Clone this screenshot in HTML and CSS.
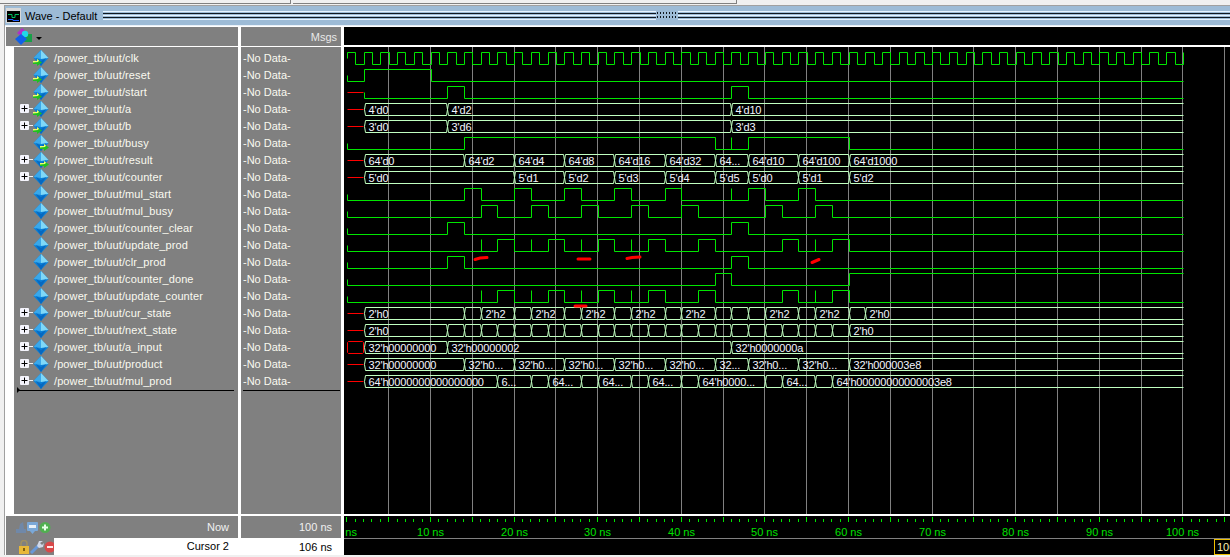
FILE: index.html
```html
<html>
  <head>
    <link rel="stylesheet" href="styles.css">
  </head>
  <body>
    <svg class="defs" width="0" height="0">
      <defs>
        <symbol id="diamond" viewBox="0 0 16 16">
          <polygon points="8,0 15.5,8 8,16 0.5,8" fill="#0a80d8"/>
          <polygon points="8,0 15.5,8 8,9" fill="#7fd8f8"/>
          <polygon points="8,0 8,9 0.5,8" fill="#3aa8ea"/>
          <polygon points="8,11 13,8 8,16 3,8" fill="#0668c0"/>
        </symbol>
        <symbol id="arrow" viewBox="0 0 9 7">
          <polygon points="0,2 4,2 4,0 9,3.5 4,7 4,5 0,5" fill="#20c020"/>
          <polygon points="0,2 4,2 4,0 6,1.5 5,3 0,3.5" fill="#f0ff70"/>
        </symbol>
        <symbol id="plus" viewBox="0 0 9 9">
          <rect x="0" y="0" width="9" height="9" rx="1" fill="#f4f4fc"/>
          <path d="M4.5 1.5V7.5M1.5 4.5H7.5" stroke="#000" stroke-width="1"/>
        </symbol>
      </defs>
    </svg>

    <div class="mdi-strip">
      <div class="mdi-tab tab-one"></div>
      <div class="mdi-tab tab-two"></div>
    </div>

    <div class="window">
      <div class="titlebar">
        <svg class="title-icon" width="15" height="15" viewBox="0 0 15 15">
          <rect width="15" height="15" fill="#d8d8d8"/>
          <rect x="1" y="3" width="13" height="11" fill="#000"/>
          <path d="M2 6.5H6V9.5H9V6.5H13" stroke="#00c060" fill="none"/>
          <path d="M2 11.5H7V12.5H13" stroke="#2060ff" fill="none"/>
        </svg>
        <span class="title-text">Wave - Default</span>
        <div class="title-lines"></div>
        <div class="title-grip"></div>
        <div class="title-lines"></div>
      </div>

      <div class="panes">
        <div class="col col-names">
          <div class="pane-head">
            <svg class="head-icon" width="17" height="17" viewBox="0 0 17 17">
              <polygon points="7,0 13,5 7,9 2,5" fill="#b030c8"/>
              <rect x="9" y="6" width="8" height="8" fill="#18a048"/>
              <circle cx="10" cy="6" r="3.2" fill="#20d8e8"/>
              <polygon points="6,6 12,11 6,17 0,11" fill="#1060e8"/>
            </svg>
            <span class="head-caret"></span>
          </div>
          <div class="pane-body">
            <div class="strip"></div>
            <div class="sig-list">
              <div class="sig"><span class="tree"></span><span class="icon"><svg width="16" height="16"><use href="#diamond"/></svg><svg class="arrow-in" width="9" height="7"><use href="#arrow"/></svg></span><span class="sig-name">/power_tb/uut/clk</span></div>
              <div class="sig"><span class="tree"></span><span class="icon"><svg width="16" height="16"><use href="#diamond"/></svg><svg class="arrow-in" width="9" height="7"><use href="#arrow"/></svg></span><span class="sig-name">/power_tb/uut/reset</span></div>
              <div class="sig"><span class="tree"></span><span class="icon"><svg width="16" height="16"><use href="#diamond"/></svg><svg class="arrow-in" width="9" height="7"><use href="#arrow"/></svg></span><span class="sig-name">/power_tb/uut/start</span></div>
              <div class="sig"><span class="tree has-plus"><svg width="9" height="9"><use href="#plus"/></svg></span><span class="icon"><svg width="16" height="16"><use href="#diamond"/></svg><svg class="arrow-in" width="9" height="7"><use href="#arrow"/></svg></span><span class="sig-name">/power_tb/uut/a</span></div>
              <div class="sig"><span class="tree has-plus"><svg width="9" height="9"><use href="#plus"/></svg></span><span class="icon"><svg width="16" height="16"><use href="#diamond"/></svg><svg class="arrow-in" width="9" height="7"><use href="#arrow"/></svg></span><span class="sig-name">/power_tb/uut/b</span></div>
              <div class="sig"><span class="tree"></span><span class="icon"><svg width="16" height="16"><use href="#diamond"/></svg><svg class="arrow-out" width="9" height="7"><use href="#arrow"/></svg></span><span class="sig-name">/power_tb/uut/busy</span></div>
              <div class="sig"><span class="tree has-plus"><svg width="9" height="9"><use href="#plus"/></svg></span><span class="icon"><svg width="16" height="16"><use href="#diamond"/></svg><svg class="arrow-out" width="9" height="7"><use href="#arrow"/></svg></span><span class="sig-name">/power_tb/uut/result</span></div>
              <div class="sig"><span class="tree has-plus"><svg width="9" height="9"><use href="#plus"/></svg></span><span class="icon"><svg width="16" height="16"><use href="#diamond"/></svg></span><span class="sig-name">/power_tb/uut/counter</span></div>
              <div class="sig"><span class="tree"></span><span class="icon"><svg width="16" height="16"><use href="#diamond"/></svg></span><span class="sig-name">/power_tb/uut/mul_start</span></div>
              <div class="sig"><span class="tree"></span><span class="icon"><svg width="16" height="16"><use href="#diamond"/></svg></span><span class="sig-name">/power_tb/uut/mul_busy</span></div>
              <div class="sig"><span class="tree"></span><span class="icon"><svg width="16" height="16"><use href="#diamond"/></svg></span><span class="sig-name">/power_tb/uut/counter_clear</span></div>
              <div class="sig"><span class="tree"></span><span class="icon"><svg width="16" height="16"><use href="#diamond"/></svg></span><span class="sig-name">/power_tb/uut/update_prod</span></div>
              <div class="sig"><span class="tree"></span><span class="icon"><svg width="16" height="16"><use href="#diamond"/></svg></span><span class="sig-name">/power_tb/uut/clr_prod</span></div>
              <div class="sig"><span class="tree"></span><span class="icon"><svg width="16" height="16"><use href="#diamond"/></svg></span><span class="sig-name">/power_tb/uut/counter_done</span></div>
              <div class="sig"><span class="tree"></span><span class="icon"><svg width="16" height="16"><use href="#diamond"/></svg></span><span class="sig-name">/power_tb/uut/update_counter</span></div>
              <div class="sig"><span class="tree has-plus"><svg width="9" height="9"><use href="#plus"/></svg></span><span class="icon"><svg width="16" height="16"><use href="#diamond"/></svg></span><span class="sig-name">/power_tb/uut/cur_state</span></div>
              <div class="sig"><span class="tree has-plus"><svg width="9" height="9"><use href="#plus"/></svg></span><span class="icon"><svg width="16" height="16"><use href="#diamond"/></svg></span><span class="sig-name">/power_tb/uut/next_state</span></div>
              <div class="sig"><span class="tree has-plus"><svg width="9" height="9"><use href="#plus"/></svg></span><span class="icon"><svg width="16" height="16"><use href="#diamond"/></svg></span><span class="sig-name">/power_tb/uut/a_input</span></div>
              <div class="sig"><span class="tree has-plus"><svg width="9" height="9"><use href="#plus"/></svg></span><span class="icon"><svg width="16" height="16"><use href="#diamond"/></svg></span><span class="sig-name">/power_tb/uut/product</span></div>
              <div class="sig"><span class="tree has-plus"><svg width="9" height="9"><use href="#plus"/></svg></span><span class="icon"><svg width="16" height="16"><use href="#diamond"/></svg></span><span class="sig-name">/power_tb/uut/mul_prod</span></div>
              <div class="insert-line"><span class="insert-mark"></span></div>
            </div>
          </div>
          <div class="pane-foot">
            <div class="foot-row foot-now">
              <svg class="foot-icons" width="36" height="13" viewBox="0 0 36 13">
                <path d="M1 12L1 8L4 8L5 3L8 1L9 8L11 8L11 12Z" fill="#7088a8"/>
                <rect x="12" y="1" width="11" height="9" rx="1" fill="#7aa8d8"/>
                <rect x="14" y="4" width="7" height="3" fill="#e8f0f8"/>
                <path d="M15 10H20L17.500 13Z" fill="#7aa8d8"/>
                <circle cx="30" cy="6.500" r="5.500" fill="#50b050"/>
                <path d="M30 3.500V9.500M27 6.500H33" stroke="#e8ffe8" stroke-width="2"/>
              </svg>
              <span class="foot-label">Now</span>
            </div>
            <div class="foot-row foot-cursor">
              <svg class="cursor-icons" width="38" height="14" viewBox="0 0 38 14">
                <rect x="1" y="6" width="10" height="8" fill="#e8b838"/>
                <path d="M3 6V3.500A3 3 0 0 1 9 3.500V6" fill="none" stroke="#a09060" stroke-width="1.500"/>
                <rect x="5" y="8" width="2" height="3" fill="#806010"/>
                <path d="M13 13L21 5" stroke="#6898d8" stroke-width="3"/>
                <path d="M19 6L21 1L25 1L22 3L24 5L26 3L25 7L21 8Z" fill="#d0d8e8"/>
                <circle cx="32" cy="7" r="5.500" fill="#d84848"/>
                <path d="M29 7H35" stroke="#ffe8e8" stroke-width="2"/>
              </svg>
              <div class="cursor-name">Cursor 2</div>
            </div>
          </div>
        </div>

        <div class="col col-msgs">
          <div class="pane-head msgs-head">Msgs</div>
          <div class="pane-body">
            <div class="msg-list">
              <div class="msg">-No Data-</div>
              <div class="msg">-No Data-</div>
              <div class="msg">-No Data-</div>
              <div class="msg">-No Data-</div>
              <div class="msg">-No Data-</div>
              <div class="msg">-No Data-</div>
              <div class="msg">-No Data-</div>
              <div class="msg">-No Data-</div>
              <div class="msg">-No Data-</div>
              <div class="msg">-No Data-</div>
              <div class="msg">-No Data-</div>
              <div class="msg">-No Data-</div>
              <div class="msg">-No Data-</div>
              <div class="msg">-No Data-</div>
              <div class="msg">-No Data-</div>
              <div class="msg">-No Data-</div>
              <div class="msg">-No Data-</div>
              <div class="msg">-No Data-</div>
              <div class="msg">-No Data-</div>
              <div class="msg">-No Data-</div>
              <div class="insert-line msg-line"></div>
            </div>
          </div>
          <div class="pane-foot">
            <div class="foot-row time-now">100 ns</div>
            <div class="foot-row time-cursor">106 ns</div>
          </div>
        </div>

        <div class="col col-wave">
          <div class="wave-head"></div>
          <svg id="waveCanvas" class="wave-canvas" width="886" height="467" viewBox="344 47 886 467"></svg>
          <svg id="timeCanvas" class="time-canvas" width="886" height="39" viewBox="344 516 886 39"></svg>
        </div>
      </div>
    </div>

    <script src="wave.js"></script>
  </body>
</html>
```

FILE: styles.css
```css
body {
  font-family: "Liberation Sans", Arial, sans-serif;
  font-size: 11px;
  background-color: #f0f0f0;
  margin: 0;
  width: 1230px;
  height: 557px;
  overflow: hidden;
}
.defs {
  display: block;
  height: 0;
}
.mdi-strip {
  display: flex;
  height: 5px;
}
.mdi-tab {
  height: 3px;
  border-bottom: 1px solid #808080;
  border-right: 1px solid #808080;
}
.tab-one {
  width: 290px;
}
.tab-two {
  width: 443px;
  margin-left: 2px;
}
.window {
  margin-left: 4px;
  border-top: 1px solid #a0a0a0;
  border-left: 1px solid #a0a0a0;
}
.titlebar {
  display: flex;
  align-items: center;
  height: 19px;
  background-color: #9dbbd6;
  border-bottom: 1px solid #e8f0f8;
}
.title-icon {
  margin-left: 1px;
  flex: none;
}
.title-text {
  margin-left: 4px;
  margin-right: 6px;
  font-size: 11px;
  color: #000;
  white-space: nowrap;
}
.title-lines {
  flex: 1;
  height: 9px;
  background: linear-gradient(to bottom, #e8f4ff 0 1px, #9dbbd6 1px 2px, #101820 2px 3px, #9dbbd6 3px 4px, #e8f4ff 4px 5px, #9dbbd6 5px 6px, #101820 6px 7px, #9dbbd6 7px 8px, #e8f4ff 8px 9px);
}
.title-grip {
  width: 22px;
  height: 9px;
  flex: none;
  background-color: #9dbbd6;
  background-image: radial-gradient(#101820 0.8px, transparent 1px);
  background-size: 3px 4px;
}
.panes {
  display: flex;
  gap: 3px;
  padding: 1px 0 0 1px;
  background-color: #fff;
  height: 528px;
}
.col {
  display: flex;
  flex-direction: column;
}
.col-names {
  width: 232px;
}
.col-msgs {
  width: 100px;
}
.col-wave {
  width: 886px;
}
.pane-head {
  display: flex;
  align-items: center;
  height: 19px;
  background-color: #808080;
  color: #e8e8e8;
}
.msgs-head {
  justify-content: flex-end;
  padding-right: 4px;
}
.head-icon {
  margin-left: 9px;
}
.head-caret {
  margin-left: 4px;
  margin-top: 3px;
  border-left: 3px solid transparent;
  border-right: 3px solid transparent;
  border-top: 3px solid #000;
}
.pane-body {
  display: flex;
  height: 467px;
  margin-top: 1px;
  background-color: #808080;
}
.strip {
  width: 8px;
  background-color: #fff;
}
.sig-list {
  flex: 1;
  padding-top: 2px;
}
.sig {
  display: flex;
  align-items: center;
  height: 17px;
  color: #fafaf0;
}
.tree {
  display: flex;
  align-items: center;
  width: 19px;
  padding-left: 6px;
  box-sizing: border-box;
}
.has-plus::after {
  content: "";
  width: 4px;
  height: 1px;
  background-color: #f0f0f0;
}
.tree svg {
  display: block;
  flex: none;
}
.icon {
  position: relative;
  width: 16px;
  height: 16px;
}
.icon > svg {
  display: block;
}
.icon .arrow-in {
  position: absolute;
  left: 0;
  top: 9px;
}
.icon .arrow-out {
  position: absolute;
  left: 7px;
  top: 9px;
}
.sig-name {
  margin-left: 5px;
  letter-spacing: 0.1px;
  white-space: nowrap;
}
.insert-line {
  position: relative;
  height: 1px;
  margin: 1px 4px 0 3px;
  background-color: #000;
}
.insert-mark {
  position: absolute;
  left: 0;
  top: -3px;
  border-left: 3px solid #000;
  border-top: 3px solid transparent;
  border-bottom: 3px solid transparent;
}
.msg-list {
  flex: 1;
  padding-top: 2px;
}
.msg {
  display: flex;
  align-items: center;
  height: 17px;
  padding-left: 2px;
  color: #fafaf0;
  white-space: nowrap;
}
.msg-line {
  margin: 1px 1px 0 2px;
}
.pane-foot {
  margin-top: 2px;
  height: 39px;
  display: flex;
  flex-direction: column;
}
.foot-row {
  display: flex;
  align-items: center;
  background-color: #808080;
}
.foot-now {
  height: 22px;
  color: #f0f0f0;
}
.foot-icons {
  margin-left: 9px;
}
.foot-label {
  margin-left: auto;
  padding-right: 9px;
}
.foot-cursor {
  height: 17px;
}
.cursor-icons {
  margin-left: 12px;
  margin-right: -2px;
  flex: none;
}
.cursor-name {
  flex: 1;
  height: 17px;
  line-height: 17px;
  padding-right: 9px;
  text-align: right;
  background-color: #fff;
  color: #000;
}
.time-now {
  height: 22px;
  justify-content: flex-end;
  padding-right: 9px;
  color: #f0f0f0;
}
.time-cursor {
  height: 17px;
  justify-content: flex-end;
  padding-right: 9px;
  background-color: #fff;
  color: #000;
}
.wave-head {
  height: 18px;
  margin-bottom: 2px;
  background-color: #000;
  border-bottom: 0;
}
.wave-canvas {
  display: block;
  background-color: #000;
}
.time-canvas {
  display: block;
  margin-top: 2px;
  background-color: #000;
}
.wave-text {
  font-family: "Liberation Sans", Arial, sans-serif;
  font-size: 11px;
  letter-spacing: -0.15px;
  fill: #f4f6ff;
}
.time-text {
  font-family: "Liberation Sans", Arial, sans-serif;
  font-size: 11px;
  fill: #00e000;
}
.cursor-text {
  font-family: "Liberation Sans", Arial, sans-serif;
  font-size: 11px;
  fill: #fff0b0;
}
```

FILE: wave.js
```js
// Wave data, all times in ns
const GREEN = "#00e600";
const BUS = "#c0ffc0";
const RED = "#ff0000";
const GRID = "#808080";

const canvas = document.getElementById("waveCanvas");
const timeCanvas = document.getElementById("timeCanvas");

function gridX(t) {
  return Math.round(346.4 + 8.36 * t) + 0.5;
}
function edgeX(t) {
  return Math.round(346.9 + 8.36 * t) + 0.5;
}
function highY(row) {
  return 52.5 + 17 * row;
}

// every 2ns from a to b
function steps(a, b) {
  const out = [];
  for (let t = a; t < b; t += 2) out.push(["", t, t + 2]);
  return out;
}

let clockHighs = [];
for (let t = 0; t < 100; t += 2) clockHighs.push([t, t + 1]);

const updateHighs = [[18, 20], [24, 26], [30, 32], [36, 38], [42, 44], [52, 54], [58, 60]];
const updateTicks = [16, 22, 28, 34, 56];

const signals = [
  { row: 0, highs: clockHighs, startHigh: true, endRise: true },
  { row: 1, highs: [[2, 10]] },
  { row: 2, highs: [[12, 14], [46, 48]], unknownUntil: 2 },
  { row: 3, bus: [["4'd0", 2, 12], ["4'd2", 12, 46], ["4'd10", 46, 100]] },
  { row: 4, bus: [["3'd0", 2, 12], ["3'd6", 12, 46], ["3'd3", 46, 100]] },
  { row: 5, highs: [[14, 44], [48, 60]], ticks: [46] },
  {
    row: 6,
    bus: [["64'd0", 2, 14], ["64'd2", 14, 20], ["64'd4", 20, 26], ["64'd8", 26, 32], ["64'd16", 32, 38],
      ["64'd32", 38, 44], ["64...", 44, 48], ["64'd10", 48, 54], ["64'd100", 54, 60], ["64'd1000", 60, 100]],
  },
  {
    row: 7,
    bus: [["5'd0", 2, 20], ["5'd1", 20, 26], ["5'd2", 26, 32], ["5'd3", 32, 38], ["5'd4", 38, 44],
      ["5'd5", 44, 48], ["5'd0", 48, 54], ["5'd1", 54, 60], ["5'd2", 60, 100]],
  },
  { row: 8, highs: [[14, 16], [20, 22], [26, 28], [32, 34], [38, 40], [48, 50], [54, 56]], ticks: [46] },
  { row: 9, highs: [[16, 18], [22, 24], [28, 30], [34, 36], [40, 42], [50, 52], [56, 58]] },
  { row: 10, highs: [[12, 14], [46, 48]] },
  { row: 11, highs: updateHighs, ticks: updateTicks },
  { row: 12, highs: [[12, 14], [46, 48]] },
  { row: 13, highs: [[44, 46], [60, 100]] },
  { row: 14, highs: updateHighs, ticks: updateTicks },
  {
    row: 15,
    bus: [["2'h0", 2, 14], ["", 14, 16], ["2'h2", 16, 20], ["", 20, 22], ["2'h2", 22, 26], ["", 26, 28],
      ["2'h2", 28, 32], ["", 32, 34], ["2'h2", 34, 38], ["", 38, 40], ["2'h2", 40, 44], ["", 44, 46],
      ["", 46, 48], ["", 48, 50], ["2'h2", 50, 54], ["", 54, 56], ["2'h2", 56, 60], ["", 60, 62], ["2'h0", 62, 100]],
  },
  { row: 16, bus: [["2'h0", 2, 12], ...steps(12, 60), ["2'h0", 60, 100]] },
  { row: 17, redBox: true, bus: [["32'h00000000", 2, 12], ["32'h00000002", 12, 46], ["32'h0000000a", 46, 100]] },
  {
    row: 18,
    bus: [["32'h00000000", 2, 14], ["32'h0...", 14, 20], ["32'h0...", 20, 26], ["32'h0...", 26, 32],
      ["32'h0...", 32, 38], ["32'h0...", 38, 44], ["32...", 44, 48], ["32'h0...", 48, 54], ["32'h0...", 54, 60],
      ["32'h000003e8", 60, 100]],
  },
  {
    row: 19,
    bus: [["64'h0000000000000000", 2, 18], ["6...", 18, 22], ["", 22, 24], ["64...", 24, 28], ["", 28, 30],
      ["64...", 30, 34], ["", 34, 36], ["64...", 36, 40], ["", 40, 42], ["64'h0000...", 42, 50], ["", 50, 52],
      ["64...", 52, 56], ["", 56, 58], ["64'h00000000000003e8", 58, 100]],
  },
];

// red blobs seen over the traces
const blobs = [
  "M475 259.500L480 258L487 257.500",
  "M578 259H590",
  "M627 258.500L632 257.500L640 257",
  "M812 262.500L819 259.500",
  "M575 306H586",
];

let svg = "";

for (let t = 5; t <= 105; t += 5) {
  const x = gridX(t);
  svg += `<path d="M${x} 47V514" stroke="${GRID}"/>`;
}

function drawBinary(sig) {
  const top = highY(sig.row);
  const low = top + 12;
  const mid = top + 6;
  const start = sig.unknownUntil || 0;
  let d = "";
  if (sig.unknownUntil) {
    svg += `<path d="M347.500 ${mid}H${edgeX(start) - 1}" stroke="${RED}"/>`;
  }
  if (sig.startHigh) {
    d = `M${edgeX(0)} ${mid}V${top}`;
  } else {
    d = `M${edgeX(start)} ${mid}V${low}`;
  }
  sig.highs.forEach((h) => {
    if (h[0] === 0) {
      d += `H${edgeX(h[1])}V${low}`;
    } else if (h[1] === 100) {
      d += `H${edgeX(h[0])}V${top}H${edgeX(100)}`;
    } else {
      d += `H${edgeX(h[0])}V${top}H${edgeX(h[1])}V${low}`;
    }
  });
  const last = sig.highs[sig.highs.length - 1];
  if (last[1] < 100) d += `H${edgeX(100)}`;
  if (sig.endRise) d += `V${top}`;
  (sig.ticks || []).forEach((t) => {
    d += `M${edgeX(t)} ${low}V${top}`;
  });
  svg += `<path d="${d}" fill="none" stroke="${GREEN}"/>`;
}

function drawBus(sig) {
  const top = highY(sig.row);
  const low = top + 12;
  const mid = top + 6;
  const first = edgeX(2);
  if (sig.redBox) {
    svg += `<path d="M348.500 ${top}H${first - 2}L${first - 1} ${top + 1}V${low - 1}L${first - 2} ${low}H348.500L347.500 ${low - 1}V${top + 1}Z" fill="none" stroke="${RED}"/>`;
  } else {
    svg += `<path d="M347.500 ${mid}H${first - 1}" stroke="${RED}"/>`;
  }
  sig.bus.forEach((seg) => {
    const x1 = edgeX(seg[1]);
    const x2 = edgeX(seg[2]);
    const open = seg[2] === 100;
    const right = open
      ? `H${x2}M${x2} ${low}`
      : `H${x2 - 1}L${x2} ${mid}L${x2 - 1} ${low}`;
    svg += `<path d="M${x1} ${mid}L${x1 + 1} ${top}${right}H${x1 + 1}L${x1} ${mid}" fill="none" stroke="${BUS}"/>`;
    if (seg[0]) {
      svg += `<text class="wave-text" x="${x1 + 4}" y="${mid + 4}">${seg[0]}</text>`;
    }
  });
}

signals.forEach((sig) => {
  if (sig.bus) {
    drawBus(sig);
  } else {
    drawBinary(sig);
  }
});

blobs.forEach((d) => {
  svg += `<path d="${d}" fill="none" stroke="${RED}" stroke-width="3" stroke-linecap="round"/>`;
});

canvas.innerHTML = svg;

// Time axis
let axis = "";
for (let t = 0; t <= 106; t++) {
  const x = gridX(t);
  const y1 = t % 5 === 0 ? 517 : 519;
  axis += `<path d="M${x} ${y1}V522" stroke="${GREEN}"/>`;
  if (t % 10 === 0) {
    axis += `<text class="time-text" x="${x}" y="536" text-anchor="middle">${t} ns</text>`;
  }
}
axis += `<path d="M344 538.500H1230" stroke="${GRID}"/>`;
axis += `<rect x="1214.500" y="539.500" width="30" height="15" fill="#000" stroke="#f0c000"/>`;
axis += `<text class="cursor-text" x="1217" y="551">106 ns</text>`;
timeCanvas.innerHTML = axis;
```
